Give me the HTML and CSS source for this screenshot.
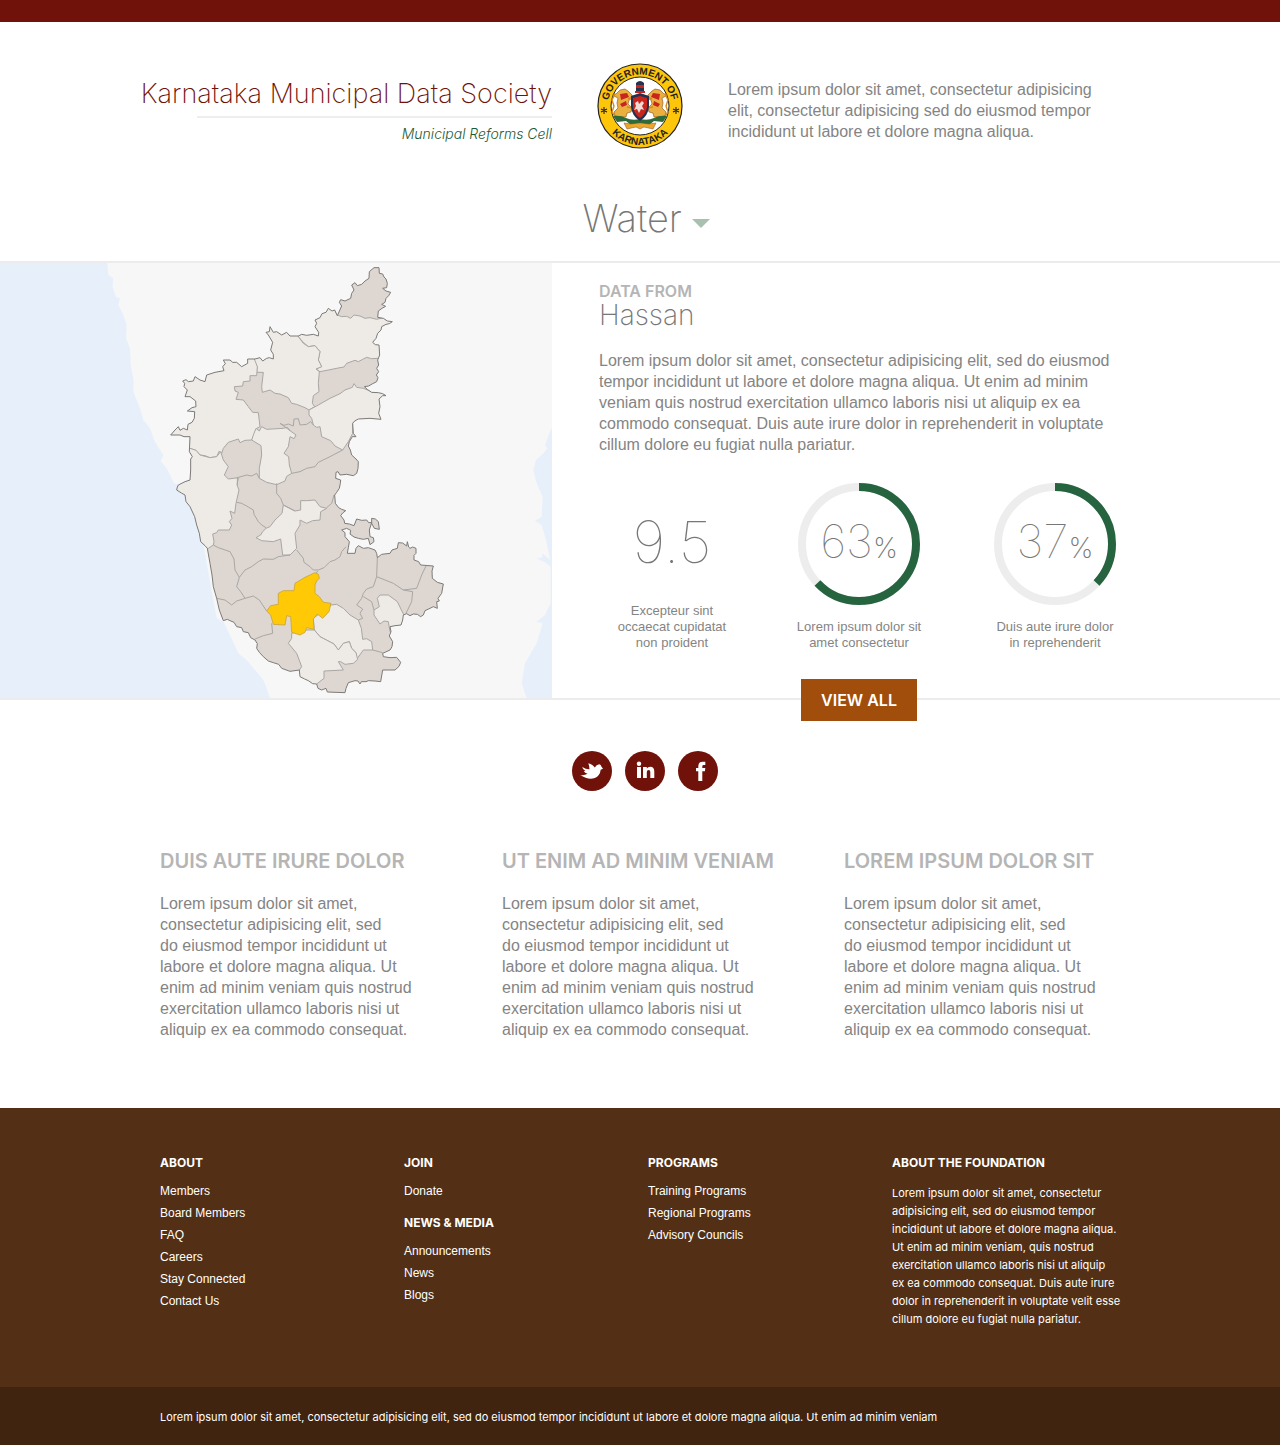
FILE: index.html
```html
<!DOCTYPE html>
<html lang="en">
<head>
<meta charset="utf-8">
<meta name="viewport" content="width=device-width, initial-scale=1">
<title>Karnataka Municipal Data Society</title>
<link rel="stylesheet" href="styles.css">
</head>
<body>
<div class="topbar"></div>

<header class="masthead">
  <div class="brand">
    <h1 class="brand-name">Karnataka Municipal Data Society</h1>
    <p class="brand-cell">Municipal Reforms Cell</p>
  </div>
  <svg class="emblem" viewBox="0 0 86 86" role="img" aria-label="Government of Karnataka">
    <defs>
      <path id="arc-top" d="M12.900 56A32.400 32.400 0 1 1 73.100 56"/>
      <path id="arc-bottom" d="M7.700 60A39.400 39.400 0 0 0 78.300 60"/>
    </defs>
    <circle cx="43" cy="43" r="42" fill="#fdc60b" stroke="#222" stroke-width="1.200"/>
    <circle cx="43" cy="43" r="29" fill="#fff" stroke="#222"/>
    <text class="emblem-text"><textPath href="#arc-top" startOffset="50%" text-anchor="middle">GOVERNMENT OF</textPath></text>
    <text class="emblem-text"><textPath href="#arc-bottom" startOffset="50%" text-anchor="middle">KARNATAKA</textPath></text>
    <path d="M7 44v7M4 46l6 3M10 46l-6 3M79 44v7M76 46l6 3M82 46l-6 3" stroke="#222" stroke-width="1.100"/>
    <g id="lion">
      <path d="M23 27l5-1 3 2 4 4 1 3-4 2-1 4 4 4-1 4-4 1-1 4h-6l-5-1-1-4 4-4-1-5 1-5-4-2-1-2 3 0z" fill="#e9b040" stroke="#8a4a17" stroke-width=".600"/>
      <path d="M23 31l7-1 2 4-8 3zM23 41l6-3 1 4-5 2z" fill="#c8261d"/>
      <path d="M18 31l-3 6 2 6-2 6 3 4M31 36l5-2M30 44l5 1" stroke="#d58b1e" stroke-width="1.400" fill="none"/>
    </g>
    <use href="#lion" transform="matrix(-1 0 0 1 86 0)"/>
    <path d="M16 53q8-1 13 2 6 3 14 1 8 2 14-1 5-3 13-2l-4 6-9-1-5 4-9-2-9 2-5-4-9 1z" fill="#2f6b3a"/>
    <path d="M27 60l7 1 9-1 9 1 7-1-3 6-9-2-4 2-4-2-9 2z" fill="#e9a82c" stroke="#8a4a17" stroke-width=".500"/>
    <path d="M34 33l9-3 9 3v11q-1 9-9 14-8-5-9-14z" fill="#26304f"/>
    <path d="M36 35l7-2 7 2v9q-1 7-7 11-6-4-7-11z" fill="#c8261d"/>
    <path d="M38 40l3-2 1 3 3-3 2 2-2 3 2 4-3-1-2 4-2-4-3 1 2-4z" fill="#f2dcd8"/>
    <path d="M39 20q4-4 8 0v8h-8z" fill="#26304f"/>
    <path d="M39 22h8v3h-8zM38 28h10v2h-10z" fill="#c8261d"/>
  </svg>
  <p class="blurb">Lorem ipsum dolor sit amet, consectetur adipisicing elit, consectetur adipisicing sed do eiusmod tempor incididunt ut labore et dolore magna aliqua.</p>
</header>

<div class="topic">
  <div class="topic-picker">
    <select class="topic-select" aria-label="Topic"><option>Water</option></select>
    <svg class="topic-arrow" viewBox="0 0 18 9" aria-hidden="true"><path d="M0 0h18L9 9z" fill="#a7c0b0"/></svg>
  </div>
</div>

<main>
  <section class="panel">
    <svg class="map" viewBox="-300 24 1656 1305" preserveAspectRatio="xMaxYMid slice" role="img" aria-label="Map of Karnataka districts, Hassan highlighted">
      <defs>
        <path id="state" d="M837 38L838 55 848 57 852 66 858 72 862 85 860 98 848 100 858 108 872 112 866 122 858 130 855 142 845 148 857 154 846 160 835 168 833 187 850 190 862 198 877 200 868 206 858 208 845 215 843 225 833 235 828 250 818 262 826 269 837 270 839 300 833 315 836 330 830 340 836 350 829 360 834 368 830 380 818 386 806 393 793 395 803 404 815 412 835 413 848 416 858 422 848 422 837 432 840 455 836 475 843 493 810 490 775 492 764 498 758 505 760 535 768 545 757 545 748 560 745 573 751 585 755 600 768 612 775 620 774 640 770 655 760 662 740 658 720 660 714 650 708 652 707 670 722 675 721 685 718 700 710 712 704 720 706 745 716 758 725 763 737 767 728 774 722 782 732 795 734 805 748 807 762 812 770 792 785 796 800 795 806 803 815 803 808 825 810 845 820 848 822 860 810 869 805 850 790 853 775 850 762 846 750 837 752 826 740 820 725 825 735 833 735 845 748 860 745 878 742 895 765 895 768 880 775 872 790 880 805 878 825 885 830 895 832 908 845 898 870 895 876 885 892 880 895 863 908 864 920 873 922 860 926 876 930 880 938 876 948 880 948 895 942 901 942 915 956 920 962 930 1000 933 996 948 997 970 1012 982 1030 987 1025 1015 1014 1030 1018 1038 1010 1040 1012 1060 1000 1055 990 1060 975 1067 970 1080 962 1085 952 1078 940 1077 930 1082 920 1076 910 1080 908 1095 903 1110 885 1112 870 1115 873 1130 868 1143 878 1160 876 1175 870 1185 848 1195 850 1205 870 1208 890 1207 902 1222 897 1234 885 1245 865 1245 848 1245 842 1280 825 1278 805 1277 798 1280 784 1280 780 1287 774 1278 765 1277 745 1283 738 1300 735 1313 682 1311 678 1300 665 1305 654 1300 650 1287 638 1286 625 1277 614 1272 600 1265 598 1245 570 1249 545 1240 536 1228 520 1223 505 1218 490 1205 478 1192 470 1180 472 1166 465 1155 452 1148 445 1133 430 1130 425 1118 410 1115 402 1102 390 1097 382 1093 370 1097 358 1065 350 1030 340 995 336 960 330 925 322 880 315 872 302 860 298 835 290 810 284 785 270 755 258 740 255 720 244 714 230 705 232 696 235 690 255 680 270 675 272 645 272 612 277 605 268 590 270 545 252 545 240 540 212 540 225 525 235 515 240 526 250 520 262 525 264 508 276 502 283 490 284 470 262 468 276 458 288 455 287 438 270 425 255 425 262 405 252 395 254 385 248 378 258 374 265 380 280 378 285 365 300 375 315 380 320 360 345 352 372 347 368 335 376 326 370 315 390 315 398 322 410 322 425 335 443 325 443 312 465 312 480 308 488 318 500 310 508 308 520 312 520 298 512 285 518 262 505 240 498 232 508 230 510 215 520 232 530 230 545 240 560 232 570 243 595 243 605 238 620 241 640 238 655 243 656 232 645 215 650 205 645 195 660 188 666 176 678 172 685 160 696 168 704 165 712 182 725 153 718 142 722 134 735 138 752 130 755 115 762 105 755 90 765 83 772 92 785 88 795 78 807 70 808 50 822 38zM815 790L826 792 835 800 838 823 823 820 815 805z"/>
        <clipPath id="state-clip"><use href="#state"/></clipPath>
      </defs>
      <rect x="-300" y="24" width="1656" height="1305" fill="#f7f7f7"/>
      <g fill="#e7f0fa">
        <path d="M-300 24H22L25 60 40 70 38 95 48 125 60 130 55 150 70 180 80 210 78 250 90 280 92 330 100 370 100 410 120 460 130 495 150 520 165 560 190 600 182 618 200 640 222 685 280 700 350 1090 370 1100 390 1140 415 1195 440 1215 490 1275 500 1300 510 1329H-300z"/>
        <path d="M1356 519L1350 530 1335 570 1342 580 1330 595 1308 615 1300 645 1310 685 1328 725 1325 785 1305 797 1325 810 1338 855 1350 915 1328 895 1325 908 1308 910 1335 922 1352 935 1352 1045 1335 1080 1310 1100 1328 1105 1310 1165 1275 1225 1265 1285 1280 1329H1356z"/>
      </g>
      <use href="#state" fill="#ddd6d1"/>
      <g clip-path="url(#state-clip)" stroke="#a9a6a3" stroke-width="3" stroke-linejoin="round">
        <g fill="#eeebe7">
          <path d="M833 310L815 311 800 307 788 313 775 320 765 316 740 325 732 336 720 338 685 345 660 350 648 342 665 335 655 315 660 290 645 272 625 275 610 262 595 245 600 180 690 140 712 180 725 185 740 184 752 190 762 180 780 183 795 190 810 188 830 193 920 170 920 310z"/>
          <path d="M595 245L610 265 625 275 645 272 660 290 655 315 665 335 648 342 658 350 655 385 657 410 640 422 637 445 644 455 627 465 615 458 590 448 575 445 565 428 540 417 525 415 510 405 487 412 485 395 490 352 470 352 472 335 463 325 463 300 460 200 595 200z"/>
          <path d="M463 312L472 335 470 362 450 362 450 378 430 380 428 393 403 395 405 408 415 412 408 433 430 435 445 455 458 472 475 473 480 515 470 520 465 540 455 555 435 556 420 563 415 552 385 562 370 580 365 595 358 588 350 605 330 608 315 602 300 600 288 586 270 580 190 560V330L463 250z"/>
          <path d="M270 580L288 586 300 600 330 608 350 605 362 590 370 615 385 635 373 660 385 672 415 668 411 690 417 705 408 745 404 775 390 768 396 790 388 800 395 810 388 825 355 825 350 833 338 837 342 860 340 870 325 880 200 900V580z"/>
          <path d="M485 515L500 523 550 520 562 517 570 527 588 540 582 551 570 545 565 575 552 595 566 605 568 630 575 655 560 664 555 678 530 689 500 682 478 670 478 640 485 600 483 572 455 555 460 540 468 520 478 528z"/>
          <path d="M627 465L655 450 690 430 720 416 735 405 757 397 762 386 770 397 790 400 820 412 900 400V510L758 505V535L745 560 728 585 705 573 692 557 665 545 660 515 650 517 640 510 635 490 627 480z"/>
          <path d="M550 750L546 775 525 795 510 815 498 820 488 830 482 840 468 848 485 857 520 860 542 852 548 900 570 900 590 880 585 835 600 810V795L620 805 638 797 660 795 662 770 680 760 660 755 645 735 620 737 602 737V765L585 768z"/>
          <path d="M693 1050L640 1090 643 1125 660 1145 702 1167 715 1185 730 1165 748 1160 755 1180 768 1193 770 1213 790 1185H818L815 1160 800 1151 788 1153 784 1120 775 1095 750 1080 730 1060 710 1048z"/>
          <path d="M575 1135L575 1150 565 1165 590 1195 605 1235 598 1245 590 1310H640L650 1287 672 1270V1248L730 1245 715 1220 722 1220 735 1228 760 1225 773 1213 768 1193 755 1180 748 1160 730 1165 715 1185 702 1167 660 1145 643 1125H612z"/>
          <path d="M840 1020L865 1020 892 1040 910 1077 930 1120 870 1130 865 1100 852 1098 840 1107 822 1080V1065L838 1055 832 1030z"/>
        </g>
        <g fill="none">
          <path d="M540 505L552 511 565 507 580 513 582 492 595 491 600 510 620 508 632 500 640 510M540 505L570 527M412 690V668L440 660 455 663 470 655 478 670M575 655L600 650 620 640 645 635 655 622 690 605 728 585"/>
          <path d="M530 685V715L542 730 550 750M410 742L425 745 440 753 460 765 462 778 475 800 485 810 498 818M550 750L585 768M702 720L695 745 680 758"/>
          <path d="M590 885L610 910 612 922 630 935 640 945 655 945 672 938 690 920 705 915 720 905 725 890 738 875M340 870L355 878 390 890 402 912 405 945 418 967 435 945 455 935 475 920 490 912 520 913 535 905 555 902 570 900"/>
          <path d="M418 967L410 995 422 1010 435 1030M350 1030L375 1035 395 1050 410 1038 435 1030 460 1023 478 1035 500 1068M515 1105L518 1135 490 1142 465 1152"/>
          <path d="M832 908L830 965 820 995 800 1002 790 1015 785 1030 770 1050 788 1062 780 1075 788 1090 775 1095M830 965L880 985 910 1005 950 1000 965 960 978 933M910 1005L938 1010 935 1040 918 1075M790 1025L815 1040 822 1065M818 1185L848 1193M653 948L645 960"/>
        </g>
      </g>
      <use href="#state" fill="none" stroke="#7d7b79" stroke-width="3" stroke-linejoin="round"/>
      <path d="M645 953L655 958 658 970 650 978 645 990V1015L658 1025 670 1042 693 1045 687 1070 668 1090 652 1077 640 1092 642 1123 620 1118 615 1132 600 1140 575 1132 572 1085 560 1082 555 1110 520 1108 512 1080 500 1068 512 1052 535 1048V1015L550 1007H582L585 985 615 967z" fill="#ffca05" stroke="#c9a43a" stroke-width="2.500"/>
    </svg>
    <div class="panel-body">
      <p class="place-label">DATA FROM</p>
      <h2 class="place">Hassan</h2>
      <p class="place-text">Lorem ipsum dolor sit amet, consectetur adipisicing elit, sed do eiusmod tempor incididunt ut labore et dolore magna aliqua. Ut enim ad minim veniam quis nostrud exercitation ullamco laboris nisi ut aliquip ex ea commodo consequat. Duis aute irure dolor in reprehenderit in voluptate cillum dolore eu fugiat nulla pariatur.</p>
      <div class="stats">
        <figure class="stat">
          <div class="stat-figure stat-figure-plain"><span class="stat-value-large">9.5</span></div>
          <figcaption>Excepteur sint<br>occaecat cupidatat<br>non proident</figcaption>
        </figure>
        <figure class="stat">
          <div class="stat-figure">
            <svg class="ring" viewBox="0 0 122 122" aria-hidden="true"><circle class="ring-track" cx="61" cy="61" r="57"/><circle class="ring-value" cx="61" cy="61" r="57" pathLength="100" stroke-dasharray="63 37"/></svg>
            <span class="stat-value">63<small>%</small></span>
          </div>
          <figcaption>Lorem ipsum dolor sit<br>amet consectetur</figcaption>
        </figure>
        <figure class="stat">
          <div class="stat-figure">
            <svg class="ring" viewBox="0 0 122 122" aria-hidden="true"><circle class="ring-track" cx="61" cy="61" r="57"/><circle class="ring-value" cx="61" cy="61" r="57" pathLength="100" stroke-dasharray="37 63"/></svg>
            <span class="stat-value">37<small>%</small></span>
          </div>
          <figcaption>Duis aute irure dolor<br>in reprehenderit</figcaption>
        </figure>
        <button class="view-all" type="button">VIEW ALL</button>
      </div>
    </div>
  </section>

  <nav class="social" aria-label="Social">
    <a href="#" aria-label="Twitter"><svg viewBox="0 0 40 40"><path d="M8.200 24q4 .8 7.300-1.200-2.700-.600-3.700-2.800h1.700q-2.800-1.300-3.300-4 4.500 2.700 7.300 2.200 0-3-1.200-6 4.700 1.300 6.500 4.300 1.500-3 4.500-3.300 1.700.3 2.200 2.500l1.500 2-2.300 1q-.7 6-5.900 8.300-6.600 2.300-14.600-3z"/></svg></a>
    <a href="#" aria-label="LinkedIn"><svg viewBox="0 0 40 40"><path d="M12 16h4v11h-4zM18 16h3.800v1.500q1.200-1.800 3.500-1.800 4 0 4 5V27h-4v-6q0-2-1.600-2-1.900 0-1.900 2.300V27H18z"/><circle cx="14" cy="12.800" r="2.200"/></svg></a>
    <a href="#" aria-label="Facebook"><svg viewBox="0 0 40 40"><path d="M20.300 30V20.300H18V17h2.300v-2q0-4.300 4.200-4.300h2.800V14h-1.700q-1.300 0-1.300 1.400V17h3l-.4 3.300h-2.600V30z"/></svg></a>
  </nav>

  <section class="columns">
    <article><h3>DUIS AUTE IRURE DOLOR</h3><p>Lorem ipsum dolor sit amet, consectetur adipisicing elit, sed do&nbsp;eiusmod tempor incididunt ut labore et dolore magna aliqua. Ut enim ad minim veniam quis nostrud exercitation ullamco laboris nisi ut aliquip ex ea commodo consequat.</p></article>
    <article><h3>UT ENIM AD MINIM VENIAM</h3><p>Lorem ipsum dolor sit amet, consectetur adipisicing elit, sed do&nbsp;eiusmod tempor incididunt ut labore et dolore magna aliqua. Ut enim ad minim veniam quis nostrud exercitation ullamco laboris nisi ut aliquip ex ea commodo consequat.</p></article>
    <article><h3>LOREM IPSUM DOLOR SIT</h3><p>Lorem ipsum dolor sit amet, consectetur adipisicing elit, sed do&nbsp;eiusmod tempor incididunt ut labore et dolore magna aliqua. Ut enim ad minim veniam quis nostrud exercitation ullamco laboris nisi ut aliquip ex ea commodo consequat.</p></article>
  </section>
</main>

<footer class="footer">
  <div class="footer-grid">
    <div>
      <h4>ABOUT</h4>
      <ul><li><a href="#">Members</a></li><li><a href="#">Board Members</a></li><li><a href="#">FAQ</a></li><li><a href="#">Careers</a></li><li><a href="#">Stay Connected</a></li><li><a href="#">Contact Us</a></li></ul>
    </div>
    <div>
      <h4>JOIN</h4>
      <ul><li><a href="#">Donate</a></li></ul>
      <h4>NEWS &amp; MEDIA</h4>
      <ul><li><a href="#">Announcements</a></li><li><a href="#">News</a></li><li><a href="#">Blogs</a></li></ul>
    </div>
    <div>
      <h4>PROGRAMS</h4>
      <ul><li><a href="#">Training Programs</a></li><li><a href="#">Regional Programs</a></li><li><a href="#">Advisory Councils</a></li></ul>
    </div>
    <div>
      <h4>ABOUT THE FOUNDATION</h4>
      <p>Lorem ipsum dolor sit amet, consectetur adipisicing elit, sed do eiusmod tempor incididunt ut labore et dolore magna aliqua. Ut enim ad minim veniam, quis nostrud exercitation ullamco laboris nisi ut aliquip ex&nbsp;ea commodo consequat. Duis aute irure dolor in reprehenderit in voluptate velit esse cillum dolore eu fugiat nulla pariatur.</p>
    </div>
  </div>
  <div class="legal"><p>Lorem ipsum dolor sit amet, consectetur adipisicing elit, sed do eiusmod tempor incididunt ut labore et dolore magna aliqua. Ut enim ad minim veniam</p></div>
</footer>
</body>
</html>
```
FILE: styles.css
```css
* { box-sizing: border-box; }
body, h1, h2, h3, h4, p, ul, figure { margin: 0; padding: 0; }
body {
  font-family: "Liberation Sans", Arial, sans-serif;
  font-size: 16px;
  line-height: 21px;
  color: #848484;
  background: #fff;
}
ul { list-style: none; }
a { color: inherit; text-decoration: none; }

.topbar { height: 22px; background: #701209; }

.masthead {
  display: grid;
  grid-template-columns: 69fr 22fr 69fr;
  align-items: center;
  padding-top: 41px;
}
.brand { display: flex; flex-direction: column; align-items: flex-end; padding-top: 8px; }
.brand-name {
  font-family: Inter, sans-serif;
  font-size: 27px;
  line-height: 36px;
  font-weight: 200;
  color: #701209;
  white-space: nowrap;
}
.brand-cell {
  width: 355px;
  margin-top: 4px;
  padding-top: 6px;
  border-top: 2px solid #eee;
  font-family: Inter, sans-serif;
  font-size: 14px;
  line-height: 20px;
  font-weight: 300;
  font-style: italic;
  text-align: right;
  color: #1d5a36;
}
.emblem { width: 86px; height: 86px; justify-self: center; }
.emblem-text { font-size: 10px; font-weight: 700; fill: #222; }
.blurb { max-width: 390px; padding-top: 8px; }

.topic {
  display: flex;
  justify-content: center;
  padding: 44px 0 18px 12px;
  border-bottom: 2px solid #ececec;
}
.topic-picker { position: relative; }
.topic-select {
  display: block;
  appearance: none;
  border: 0;
  padding: 0 27px 0 0;
  background: none;
  font: 200 38px/50px Inter, sans-serif;
  color: #777;
}
.topic-arrow { position: absolute; right: 0; top: 26px; width: 18px; height: 9px; pointer-events: none; }

.panel {
  display: grid;
  grid-template-columns: 69fr 91fr;
  border-bottom: 2px solid #ececec;
}
.map { display: block; width: 100%; height: 100%; min-height: 435px; }
.panel-body { padding: 18px 0 0 47px; }
.place-label { font: 600 16px/20px Inter, sans-serif; color: #b5b5b5; }
.place { font: 200 28px/28px Inter, sans-serif; color: #777; }
.place-text { max-width: 530px; margin-top: 21px; }

.stats {
  display: grid;
  grid-template-columns: 146fr 228fr 164fr;
  align-items: end;
  max-width: 538px;
  margin-top: 26px;
}
.stat { text-align: center; font-size: 13px; line-height: 16px; }
.stat-figure { display: grid; place-items: center; margin-bottom: 14px; font-family: Inter, sans-serif; color: #777; }
.stat-figure > * { grid-area: 1 / 1; }
.stat-figure-plain { height: 122px; margin-bottom: 0; }
.ring { width: 122px; height: 122px; transform: rotate(-90deg); }
.ring circle { fill: none; stroke-width: 8; }
.ring-track { stroke: #ededed; }
.ring-value { stroke: #26633f; }
.stat-value { font-size: 46px; line-height: 48px; font-weight: 100; }
.stat-value small { font-size: 28px; font-weight: 200; }
.stat-value-large { font-size: 58px; line-height: 60px; font-weight: 100; }
.view-all {
  grid-column: 2;
  justify-self: center;
  width: 116px;
  height: 42px;
  margin: 28px 0 -24px;
  padding: 0;
  border: 0;
  background: #a14d0b;
  color: #fff;
  font: 600 16px/20px Inter, sans-serif;
  z-index: 1;
}

.social { display: flex; justify-content: center; gap: 13px; padding: 51px 0 0 10px; }
.social a { width: 40px; height: 40px; border-radius: 50%; background: #701209; }
.social svg { display: block; width: 40px; height: 40px; fill: #fff; }

.columns {
  display: grid;
  grid-template-columns: repeat(3, 270px);
  gap: 72px;
  width: 960px;
  max-width: 100%;
  margin: 0 auto;
  padding: 58px 0 68px;
}
.columns h3 { font: 600 20px/24px Inter, sans-serif; color: #b5b5b5; white-space: nowrap; }
.columns p { max-width: 260px; margin-top: 20px; }

.footer { background: #533015; color: #fff; font-size: 12px; line-height: 22px; }
.footer-grid {
  display: grid;
  grid-template-columns: repeat(3, 224px) 236px;
  gap: 20px;
  width: 960px;
  max-width: 100%;
  min-height: 279px;
  margin: 0 auto;
  padding: 44px 0 56px;
}
.footer h4 { font: 700 12px/22px Inter, sans-serif; margin-bottom: 6px; }
.footer ul + h4 { margin-top: 10px; }
.footer p { font-family: Inter, sans-serif; font-size: 11px; }
.footer-grid p { line-height: 18px; padding-top: 4px; }
.legal { background: #402410; padding: 19px 0 17px; }
.legal p { width: 960px; max-width: 100%; margin: 0 auto; }
```
